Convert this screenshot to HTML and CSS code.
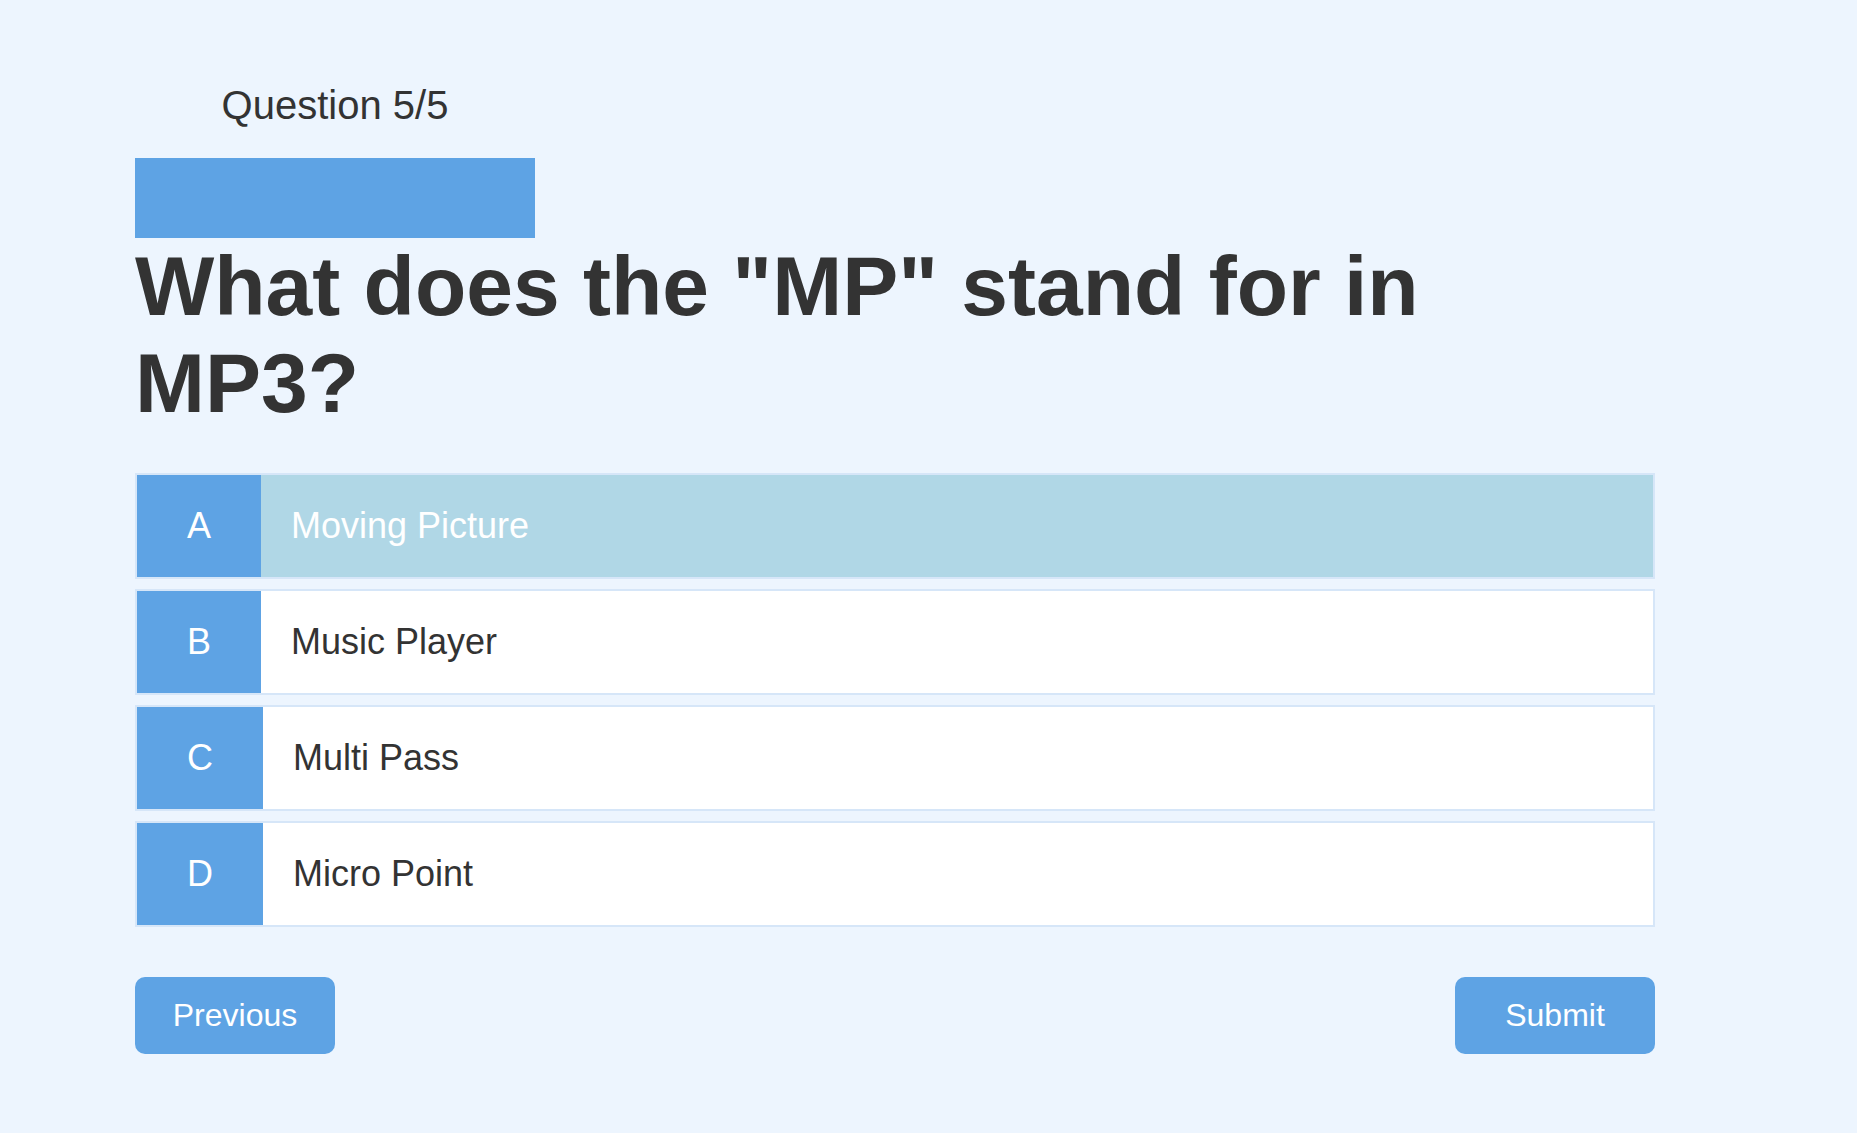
FILE: index.html
```html
<!DOCTYPE html>
<html lang="en">
<head>
<meta charset="utf-8">
<title>Quiz</title>
<link rel="stylesheet" href="styles.css">
</head>
<body>
<main class="quiz">
  <div class="progress">
    <div class="progress-label">Question 5/5</div>
    <div class="progress-bar"></div>
  </div>
  <h1 class="question">What does the "MP" stand for in MP3?</h1>
  <ul class="options">
    <li class="option selected"><span class="letter">A</span><span class="answer">Moving Picture</span></li>
    <li class="option"><span class="letter">B</span><span class="answer">Music Player</span></li>
    <li class="option"><span class="letter">C</span><span class="answer">Multi Pass</span></li>
    <li class="option"><span class="letter">D</span><span class="answer">Micro Point</span></li>
  </ul>
  <div class="nav">
    <button class="btn">Previous</button>
    <button class="btn">Submit</button>
  </div>
</main>
</body>
</html>
```
FILE: styles.css
```css
html, body {
  margin: 0;
  padding: 0;
}
body {
  background: #edf5fe;
  font-family: "Liberation Sans", Arial, sans-serif;
  color: #333333;
}
.quiz {
  width: 1520px;
  padding: 82px 0 40px 135px;
}
.progress {
  width: 400px;
}
.progress-label {
  font-size: 40px;
  line-height: 46px;
  text-align: center;
  margin-bottom: 30px;
}
.progress-bar {
  height: 80px;
  background: #5ea3e4;
}
.question {
  font-size: 84px;
  font-weight: bold;
  line-height: 96.6px;
  margin: 0 0 42px 0;
  color: #333333;
}
.options {
  list-style: none;
  margin: 0;
  padding: 0;
}
.option {
  display: flex;
  border: 2px solid #d6e6f8;
  background: #ffffff;
  margin-bottom: 10px;
  font-size: 36px;
  line-height: 42px;
}
.option.selected {
  background: #b0d7e6;
  color: #ffffff;
}
.letter {
  background: #5ea3e4;
  color: #ffffff;
  padding: 30px 50px;
}
.answer {
  padding: 30px 30px;
}
.nav {
  display: flex;
  justify-content: space-between;
  margin-top: 50px;
}
.btn {
  width: 200px;
  height: 77px;
  border: none;
  border-radius: 10px;
  background: #5ea3e4;
  color: #ffffff;
  font-family: "Liberation Sans", Arial, sans-serif;
  font-size: 32px;
  line-height: 37px;
  padding: 20px 0;
  cursor: pointer;
}
```
